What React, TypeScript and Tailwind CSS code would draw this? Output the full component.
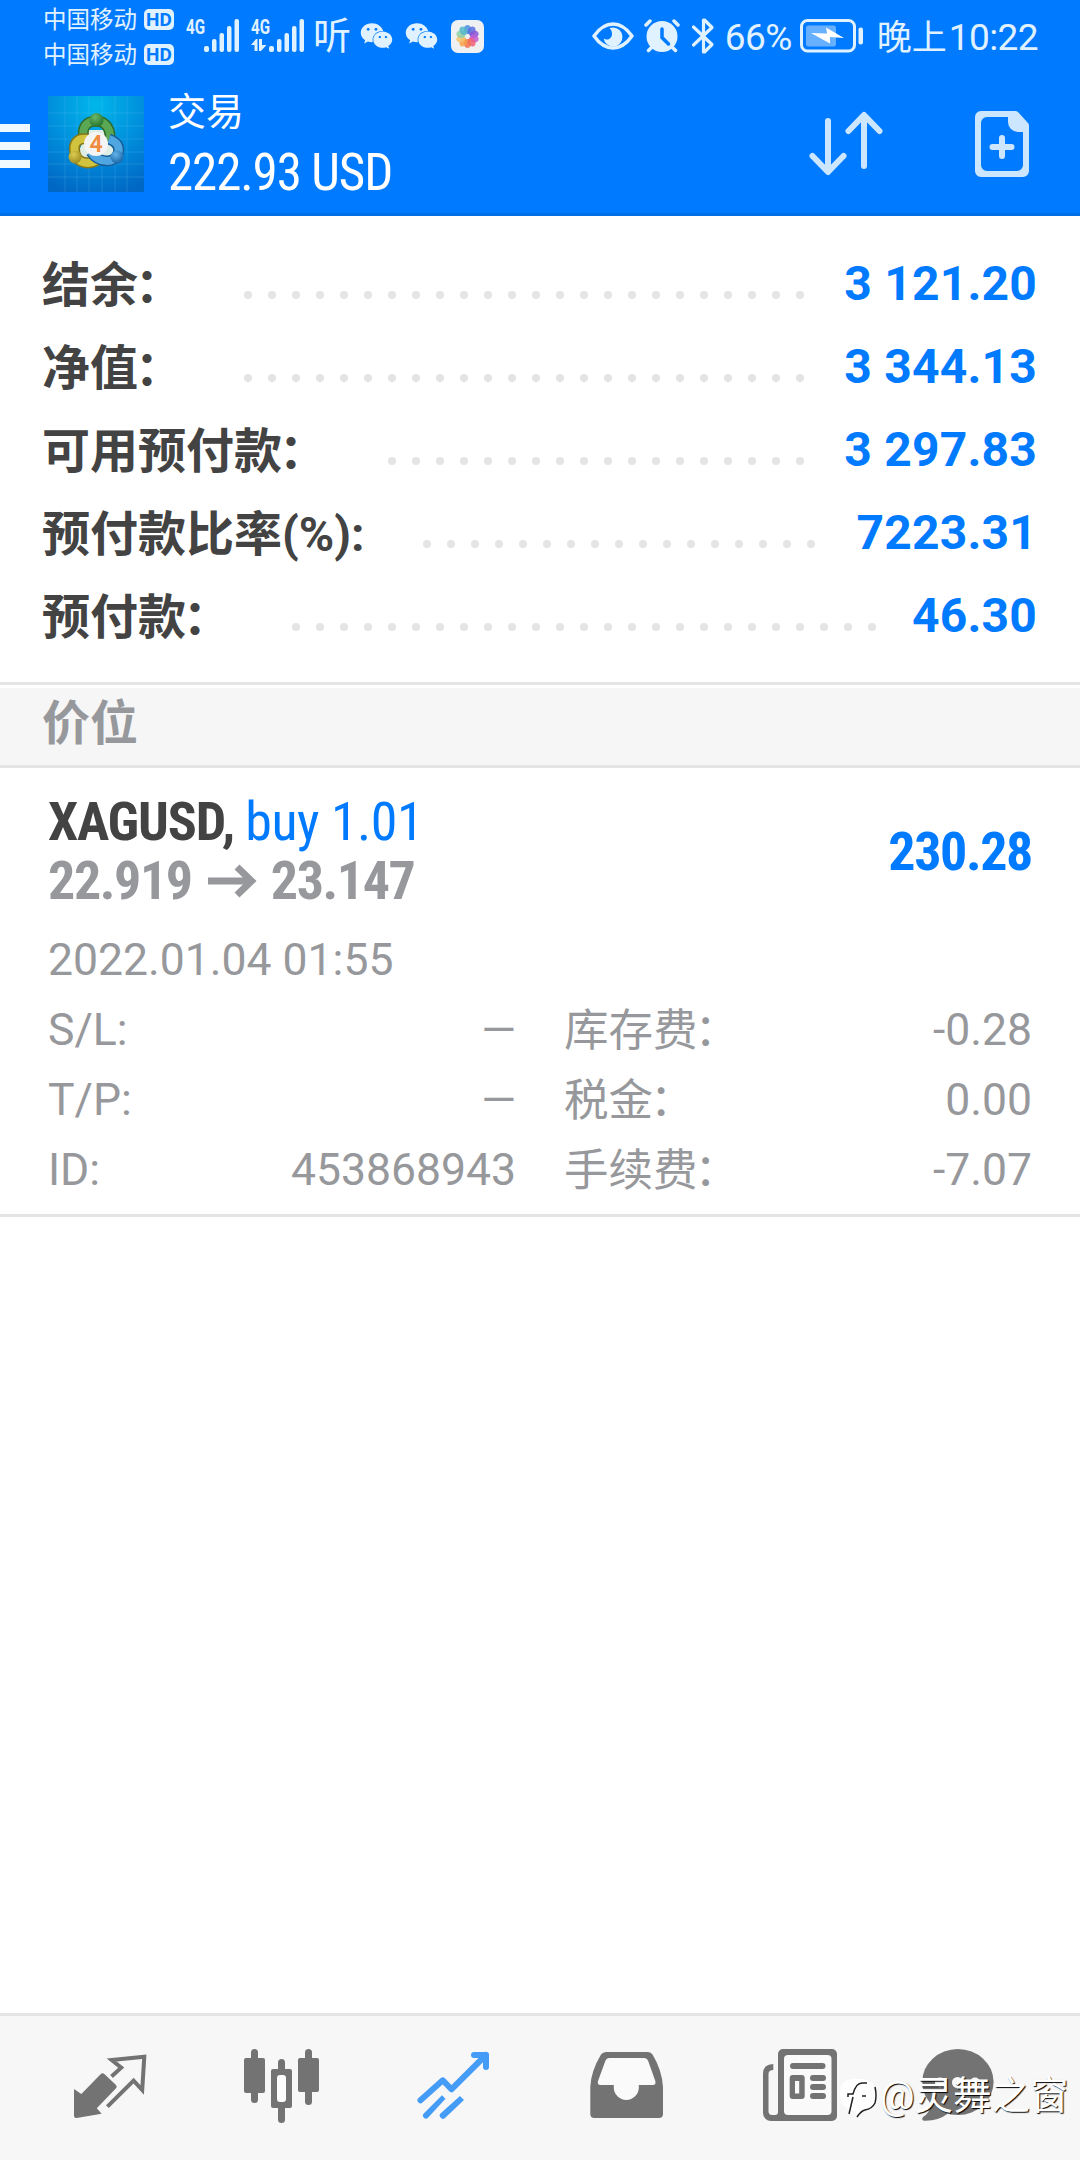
import type { ReactNode } from "react";
import { FaWeixin } from "react-icons/fa";

const account = [
  { label: "结余：", value: "3 121.20", dots: 24 },
  { label: "净值：", value: "3 344.13", dots: 24 },
  { label: "可用预付款：", value: "3 297.83", dots: 18 },
  { label: "预付款比率(%):", value: "7223.31", dots: 17 },
  { label: "预付款：", value: "46.30", dots: 25 },
];

const details = [
  { label: "S/L:", value: "—", feeLabel: "库存费：", fee: "-0.28" },
  { label: "T/P:", value: "—", feeLabel: "税金：", fee: "0.00" },
  { label: "ID:", value: "453868943", feeLabel: "手续费：", fee: "-7.07" },
];

// Tightens the last character so the full-width colon sits close to the word
function Label({ text }: { text: string }) {
  if (!text.endsWith("：")) return <>{text}</>;
  return (
    <>
      {text.slice(0, -2)}
      <span className="tracking-[-3px]">{text.slice(-2, -1)}</span>
      <span className="tracking-[3px]">：</span>
    </>
  );
}

function Carrier() {
  return (
    <div className="flex h-[35px] items-center">
      <span className="w-[101px] pt-[2px] text-[23.5px] leading-[35px]">
        中国移动
      </span>
      <span className="flex h-[21px] w-[30px] items-center justify-center rounded-[5px] bg-[#e0f2ff] text-[19px] leading-none font-bold text-[#007aff]">
        HD
      </span>
    </div>
  );
}

function Signal({ data }: { data?: boolean }) {
  return (
    <svg width="54" height="40" viewBox="0 0 54 40" fill="currentColor">
      <text
        x="0"
        y="18"
        fontSize="20"
        fontWeight="700"
        textLength="19"
        lengthAdjust="spacingAndGlyphs"
      >
        4G
      </text>
      {data && (
        <path d="M0 29l5-6h1.500v12h-3v-6zM8 23h3v6h4.500l-5.500 6H8z" />
      )}
      <rect x="18" y="30" width="5" height="6" rx="2" />
      <rect x="26" y="23" width="4.500" height="13" rx="2" />
      <rect x="33.500" y="17" width="4.500" height="19" rx="2" />
      <rect x="41" y="10" width="4.500" height="26" rx="2" />
      <rect x="48.500" y="3" width="4.500" height="33" rx="2" />
    </svg>
  );
}

function PhotosIcon() {
  const petals = [
    "#4b8fe0",
    "#5b6ee0",
    "#8a55d6",
    "#c45bd0",
    "#ee5f78",
    "#f2704d",
    "#f7a04a",
    "#f5c26b",
    "#8fd0a8",
    "#53b7c9",
  ];
  return (
    <svg className="ml-[13px]" width="33" height="33" viewBox="0 0 33 33">
      <rect width="33" height="33" rx="7" fill="#eef0f2" />
      {petals.map((color, i) => (
        <ellipse
          key={color}
          cx="16.500"
          cy="9.500"
          rx="3.600"
          ry="4.600"
          fill={color}
          opacity="0.85"
          transform={`rotate(${i * 36} 16.500 16.500)`}
        />
      ))}
    </svg>
  );
}

function StatusBar() {
  return (
    <div className="flex h-[80px] items-start text-[#e0f2ff]">
      <div className="ml-[43px] flex w-[143px] flex-col pt-[2px]">
        <Carrier />
        <Carrier />
      </div>
      <div className="flex h-[72px] items-center">
        <Signal />
        <div className="ml-[11px]">
          <Signal data />
        </div>
        <span className="ml-[8px] w-[38px] text-[38px] leading-[72px]">
          听
        </span>
        <FaWeixin className="ml-[9px] h-[32px] w-[33px]" />
        <FaWeixin className="ml-[12px] h-[32px] w-[33px]" />
        <PhotosIcon />
      </div>
      <div className="mr-[42px] ml-auto flex h-[72px] items-center">
        <svg width="42" height="28" viewBox="0 0 42 28" fill="none">
          <path
            d="M2 14C8 5.500 14 2 21 2s13 3.500 19 12c-6 8.500-12 12-19 12S8 22.500 2 14z"
            stroke="currentColor"
            strokeWidth="3.500"
            strokeLinejoin="round"
          />
          <path
            d="M21 5.500a9.500 9.500 0 1 1-9.400 11c3.400 2.500 8.400.4 8.400-4.500 0-2.500-1-4.500-2.500-5.700 1.100-.5 2.200-.8 3.500-.8z"
            fill="currentColor"
          />
        </svg>
        <svg
          className="ml-[10px]"
          width="36"
          height="34"
          viewBox="0 0 36 34"
          fill="none"
        >
          <circle cx="18" cy="17.500" r="15.500" fill="currentColor" />
          <path
            d="M2 6l4-4M34 6l-4-4M4.500 31.500l3-3M31.500 31.500l-3-3"
            stroke="currentColor"
            strokeWidth="3.500"
            strokeLinecap="round"
          />
          <path
            d="M18 10v8.500l6.500 6.500"
            stroke="#007aff"
            strokeWidth="3.500"
            strokeLinecap="round"
          />
        </svg>
        <svg
          className="ml-[11px]"
          width="24"
          height="36"
          viewBox="0 0 24 36"
          fill="none"
          stroke="currentColor"
          strokeWidth="3.200"
          strokeLinecap="round"
          strokeLinejoin="round"
        >
          <path d="M2.500 9L21 26.500l-7.500 7.500h-1V2h1L21 9.500 2.500 27" />
        </svg>
        <span className="ml-[10px] w-[68px] pt-[4px] text-[37px] leading-[74px] tracking-[-0.6px]">
          66%
        </span>
        <svg
          className="ml-[7px]"
          width="63"
          height="34"
          viewBox="0 0 63 34"
          fill="none"
        >
          <rect
            x="1.500"
            y="1.500"
            width="53"
            height="30.500"
            rx="6"
            stroke="currentColor"
            strokeWidth="3"
          />
          <rect x="6" y="6.500" width="30" height="21" rx="2.500" fill="#66b0ff" />
          <path d="M11 14l16 .5-1-6 18 10.500-14-1v6.500z" fill="#fff" />
          <rect x="58.500" y="8.500" width="4.500" height="17" rx="2" fill="currentColor" />
        </svg>
        <span className="ml-[14px] pt-[5px] text-[35px] leading-[76px]">
          晚上
        </span>
        <span className="ml-[2px] pt-[4px] text-[37px] leading-[74px] tracking-[-0.6px]">
          10:22
        </span>
      </div>
    </div>
  );
}

function AppLogo() {
  return (
    <svg className="ml-[18px]" width="96" height="96" viewBox="0 0 96 96">
      <defs>
        <radialGradient id="sky" cx="0.5" cy="0.1" r="0.95">
          <stop offset="0" stopColor="#00b7ea" />
          <stop offset="0.5" stopColor="#0090dd" />
          <stop offset="1" stopColor="#0067c4" />
        </radialGradient>
        <radialGradient id="green" cx="0.4" cy="0.3" r="0.8">
          <stop offset="0" stopColor="#6cb868" />
          <stop offset="1" stopColor="#1c6a27" />
        </radialGradient>
        <radialGradient id="yellow" cx="0.4" cy="0.3" r="0.8">
          <stop offset="0" stopColor="#ddcc50" />
          <stop offset="1" stopColor="#94841a" />
        </radialGradient>
        <radialGradient id="blue" cx="0.4" cy="0.3" r="0.8">
          <stop offset="0" stopColor="#62b4ea" />
          <stop offset="1" stopColor="#125a9e" />
        </radialGradient>
      </defs>
      <rect width="96" height="96" fill="url(#sky)" />
      <path
        d="M17 0v96M29 0v96M41 0v96M54 0v96M67 0v96M79 0v96M0 17h96M0 30h96M0 43h96M0 56h96M0 68h96M0 81h96"
        stroke="#7fd4ff"
        strokeOpacity="0.18"
      />
      <path d="M40 34h17l10 23-10 8H39l-9-8z" fill="#dfeee4" />
      <g fill="none">
        <path
          d="M36 43c-3-12 3-18 12-18s17 8 13 23"
          stroke="#2f6b2c"
          strokeWidth="11"
        />
        <path
          d="M36 43c-3-12 3-18 12-18s17 8 13 23"
          stroke="#5aa754"
          strokeWidth="8"
        />
        <path
          d="M40 43c-12-2-15 6-13 14 2 10 14 13 24 6"
          stroke="#857718"
          strokeWidth="11"
        />
        <path
          d="M40 43c-12-2-15 6-13 14 2 10 14 13 24 6"
          stroke="#d2c33f"
          strokeWidth="8"
        />
        <path
          d="M61 43c9 3 11 9 9 15-3 9-19 10-27-2"
          stroke="#1a5e98"
          strokeWidth="11"
        />
        <path
          d="M61 43c9 3 11 9 9 15-3 9-19 10-27-2"
          stroke="#4fa6e0"
          strokeWidth="8"
        />
      </g>
      <circle cx="48.500" cy="24" r="7" fill="url(#green)" />
      <circle cx="27" cy="61" r="6.500" fill="url(#yellow)" />
      <circle cx="69" cy="61" r="6.500" fill="url(#blue)" />
      <circle cx="48" cy="48" r="12" fill="#f4f4f4" />
      <text
        x="48"
        y="56"
        textAnchor="middle"
        fontSize="23"
        fontWeight="600"
        fill="#f08a3c"
      >
        4
      </text>
    </svg>
  );
}

function Header() {
  return (
    <div className="flex h-[136px] items-start border-b-3 border-[#0070e4] text-white">
      <div className="mt-[44px] flex w-[30px] flex-col gap-[10px]">
        <div className="h-2 bg-[#f0f9ff]" />
        <div className="h-2 bg-[#f0f9ff]" />
        <div className="h-2 bg-[#f0f9ff]" />
      </div>
      <div className="mt-4">
        <AppLogo />
      </div>
      <div className="ml-6 flex flex-col">
        <span className="mt-[7px] text-[38px] leading-[50px]">交易</span>
        <span className="mt-[1px] font-['Roboto_Condensed',Roboto,sans-serif] text-[51px] leading-[70px] tracking-[-1.1px]">
          222.93 USD
        </span>
      </div>
      <svg
        className="mt-[30px] mr-[92px] ml-auto"
        width="76"
        height="68"
        viewBox="807 110 76 68"
        fill="none"
        stroke="#cce6ff"
        strokeWidth="6"
        strokeLinecap="round"
        strokeLinejoin="round"
      >
        <path d="M828 121v50M812.500 156l15.500 16 15.500-16" />
        <path d="M864 166v-49M848.500 131l15.500-16 15.500 16" />
      </svg>
      <svg
        className="mt-[31px] mr-[51px]"
        width="54"
        height="66"
        viewBox="0 0 54 66"
      >
        <path
          d="M6 0h34c1.500 0 2.500.4 3.500 1.400l9 10c1 1 1.500 2 1.500 3.600v45a6 6 0 0 1-6 6H6a6 6 0 0 1-6-6V6a6 6 0 0 1 6-6zM12 6a6 6 0 0 0-6 6v42a6 6 0 0 0 6 6h30a6 6 0 0 0 6-6V21h-5a10 10 0 0 1-10-10V6z"
          fill="#cce6ff"
          fillRule="evenodd"
        />
        <path
          d="M27 27v18M17.500 36h19"
          stroke="#cce6ff"
          strokeWidth="6"
          strokeLinecap="round"
        />
      </svg>
    </div>
  );
}

function AccountRow({
  label,
  value,
  dots,
}: {
  label: string;
  value: string;
  dots: number;
}) {
  return (
    <div className="flex h-[83px] items-start text-[48px] leading-[83px] font-bold">
      <span className="pt-[2px] text-[#434343]">
        <Label text={label} />
      </span>
      <div className="mt-[49px] ml-[58px] flex gap-4">
        {Array.from({ length: dots }, (_, i) => (
          <div key={i} className="size-2 rounded-full bg-[#e4e4e4]" />
        ))}
      </div>
      <span className="ml-auto tracking-[0.2px] text-[#007aff]">{value}</span>
    </div>
  );
}

function Position() {
  return (
    <div className="border-b-3 border-[#e4e4e4] px-[48px] pb-[9px] text-[#97989c]">
      <div className="flex items-center justify-between pt-[24px] font-['Roboto_Condensed',Roboto,sans-serif] text-[54px] tracking-[-1.15px]">
        <div className="flex flex-col">
          <div className="leading-[59px]">
            <span className="font-bold text-[#434343]">XAGUSD, </span>
            <span className="tracking-[-0.5px] text-[#007aff]">buy 1.01</span>
          </div>
          <div className="flex items-center leading-[59px] font-bold tracking-[-1.4px]">
            22.919
            <svg
              className="mr-[14px] ml-4"
              width="49"
              height="34"
              viewBox="0 0 49 34"
              fill="none"
              stroke="currentColor"
              strokeWidth="7"
            >
              <path d="M0 17h43M29 3l14.500 14L29 31" />
            </svg>
            23.147
          </div>
        </div>
        <div className="leading-[59px] font-bold tracking-[-1.4px] text-[#007aff]">
          230.28
        </div>
      </div>
      <div className="mt-[15px] text-[44.5px] leading-[70px]">
        <div>2022.01.04 01:55</div>
        {details.map((row) => (
          <div key={row.label} className="flex">
            <div className="flex w-[468px] justify-between">
              <span>{row.label}</span>
              <span>{row.value}</span>
            </div>
            <div className="ml-[48px] flex h-[70px] grow justify-between">
              <span className="pt-[1px]">
                <Label text={row.feeLabel} />
              </span>
              <span>{row.fee}</span>
            </div>
          </div>
        ))}
      </div>
    </div>
  );
}

function NavIcon({ children }: { children: ReactNode }) {
  return (
    <svg width="80" height="80" viewBox="0 0 80 80" fill="currentColor">
      {children}
    </svg>
  );
}

function BottomNav() {
  return (
    <div className="flex h-[147px] items-start gap-[92px] border-t-3 border-[#e4e4e4] bg-[#f7f7f7] pt-[30px] pl-[70px] text-[#737373]">
      <NavIcon>
        <path d="M4 43l7.300 5 19.300-19.700q2-2 4 0L46 39q1.500 1.700 0 3.300L26.800 62.300l4.800 5.400-25 4.300Q4 72.300 4 69.700z" />
        <path
          d="M41.500 30.500l9.700-8.800-9.500-7.700 32.600-3.300L72.200 44l-8.600-9.300-26.200 26"
          fill="none"
          stroke="currentColor"
          strokeWidth="4"
        />
      </NavIcon>
      <NavIcon>
        <rect x="2" y="12" width="21" height="35" rx="2" />
        <rect x="9" y="3" width="7" height="54" rx="3.500" />
        <rect x="29" y="23" width="21" height="39" rx="2" />
        <rect x="36" y="13" width="7" height="64" rx="3.500" />
        <rect x="35" y="29" width="9" height="27" rx="3" fill="#fcfcfc" />
        <rect x="56" y="12" width="21" height="34" rx="2" />
        <rect x="63" y="3" width="7" height="56" rx="3.500" />
      </NavIcon>
      <NavIcon>
        <g
          fill="none"
          stroke="#459cf7"
          strokeWidth="6"
          strokeLinecap="round"
          strokeLinejoin="round"
        >
          <path d="M6.500 54.300l22.300-20 8.600 9L71.900 9" />
          <path d="M60 9h12v12" />
        </g>
        <path
          d="M10 67.300l18-18 3.500 3.500-17.500 19a3 3 0 0 1-4-4.500zM27 67l19-17 4 4-19 18a3 3 0 0 1-4-5z"
          fill="#459cf7"
        />
      </NavIcon>
      <NavIcon>
        <path d="M20 6h42q3 0 4.500 2.500Q76 24 77 41v27a4 4 0 0 1-4 4H8.300a4 4 0 0 1-4-4V41Q5 25 15 8.500 17 6 20 6z" />
        <path
          d="M23 12h35.500q2.500 0 3.500 2.500l7.300 20.500q1 4-2.500 4H52.800v2.500a12.500 12.500 0 0 1-25 0V39H14.500q-3.500 0-2.500-4L19.500 14.500Q20.500 12 23 12z"
          fill="#fafafa"
        />
      </NavIcon>
      <NavIcon>
        <path d="M25 3h49a5 5 0 0 1 5 5v62a5 5 0 0 1-5 5H13a8 8 0 0 1-8-8V28q0-10 10.300-10v6q-4.800 0-4.800 4v37q0 4 3.500 4h3q3 0 3-3V8a5 5 0 0 1 5-5z" />
        <rect x="26" y="9" width="47.500" height="60" rx="4" fill="#fafafa" />
        <rect x="32" y="17" width="35.500" height="6" rx="3" />
        <rect x="52" y="29" width="16" height="6" rx="3" />
        <rect x="52" y="38" width="16" height="6" rx="3" />
        <rect x="52" y="47" width="16" height="6" rx="3" />
        <rect x="31.700" y="29" width="15" height="24" rx="3" />
        <rect x="37" y="35" width="4.200" height="12.500" fill="#fafafa" />
      </NavIcon>
      <div className="relative -ml-[14px]">
        <NavIcon>
          <ellipse cx="41.900" cy="36" rx="35.700" ry="33" />
          <path d="M12 52q6 12-5 19-2 3 1 3.700 14 .5 24-7.200z" />
          <g fill="#fafafa">
            <circle cx="24" cy="36.500" r="5" />
            <circle cx="41.500" cy="36.500" r="5.500" />
            <circle cx="59" cy="36.500" r="5" />
          </g>
        </NavIcon>
        <div className="absolute top-[27px] -left-[78px] flex items-center">
          <svg width="40" height="46" viewBox="0 0 40 46">
            <path
              d="M2 20Q2 6 17 6h7q14 2 14 16 0 16-11 16-5 0-8 6l-1-6Q2 37 2 20z"
              fill="#fff"
            />
            <path
              d="M10 24v-3h5q3-11 9-11h5M15 24l-4 17M24 23h4M37 14q2 9 0 16-3 6-10 7-4 1-8 7"
              fill="none"
              stroke="#222"
              strokeWidth="1.500"
            />
          </svg>
          <span className="ml-[2px] text-[38.5px] leading-[46px] whitespace-nowrap text-white text-shadow-[1px_1px_1px_#000]">
            @灵舞之窗
          </span>
        </div>
      </div>
    </div>
  );
}

export default function App() {
  return (
    <div
      lang="zh-CN"
      className="flex h-[2160px] w-[1080px] flex-col overflow-hidden bg-white font-[Roboto,'Noto_Sans_CJK_SC',sans-serif] [text-spacing-trim:space-all]"
    >
      <div className="bg-[#007aff]">
        <StatusBar />
        <Header />
      </div>
      <div className="border-b-3 border-[#e4e4e4] pt-[26px] pr-[43px] pb-[25px] pl-[42px]">
        {account.map((row) => (
          <AccountRow key={row.label} {...row} />
        ))}
      </div>
      <div className="mt-[3px] h-[80px] border-b-3 border-[#e4e4e4] bg-[#f6f6f6] pt-[3px] pl-[42px] text-[48px] leading-[66px] font-bold text-[#97989c]">
        价位
      </div>
      <Position />
      <div className="grow" />
      <BottomNav />
    </div>
  );
}
